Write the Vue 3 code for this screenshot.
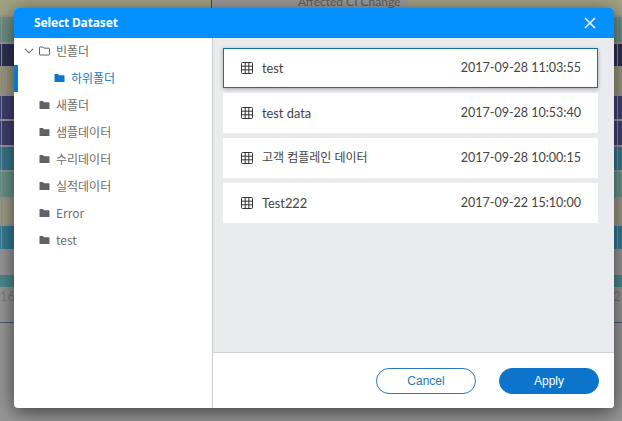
<script setup>
const bands = [
  { h: 25, c: '#6f8f86' },
  { h: 22, c: '#2e3152' },
  { h: 26, c: '#9c9a82' },
  { h: 23, c: '#3f3f70' },
  { h: 24, c: '#3f3f70' },
  { h: 23, c: '#39778a' },
  { h: 25, c: '#6a9288' },
  { h: 25, c: '#9e9c88' },
  { h: 23, c: '#357a92' }
]
const folders = ['새폴더', '샘플데이터', '수리데이터', '실적데이터', 'Error', 'test']
const rows = [
  { name: 'test', date: '2017-09-28 11:03:55', selected: true },
  { name: 'test data', date: '2017-09-28 10:53:40' },
  { name: '고객 컴플레인 데이터', date: '2017-09-28 10:00:15', cjk: true },
  { name: 'Test222', date: '2017-09-22 15:10:00' }
]
const folderPath = 'M0.5 1.5 Q0.5 1 1 1 H4 L5 2.2 H10 Q10.5 2.2 10.5 2.7 V8.5 Q10.5 9 10 9 H1 Q0.5 9 0.5 8.5 Z'
</script>

<template>
  <div class="page">
    <div class="backdrop">
      <div class="strip">
        <div class="strip-cell khaki"></div>
        <div class="strip-cell title-cell">Affected CI Change</div>
        <div class="strip-cell khaki grow"></div>
      </div>
      <div v-for="(b, i) in bands" :key="i" class="band" :style="{ height: b.h + 'px', backgroundColor: b.c }"></div>
      <div class="spacer"></div>
      <div class="teal-band"></div>
      <div class="axis"><span>16</span><span>2</span></div>
      <div class="axis-line"></div>
    </div>

    <div class="dialog">
      <header class="head">
        <span class="title">Select Dataset</span>
        <svg class="close" width="12" height="12" viewBox="0 0 12 12">
          <path d="M1 1 L11 11 M11 1 L1 11" stroke="#fff" stroke-width="1.5" fill="none" />
        </svg>
      </header>
      <div class="body">
        <aside class="tree">
          <div class="node">
            <svg class="chev" width="10" height="6" viewBox="0 0 10 6">
              <path d="M1 0.8 L5 4.8 L9 0.8" stroke="#666" stroke-width="1.1" fill="none" />
            </svg>
            <svg class="fold" width="11" height="10" viewBox="0 0 11 10">
              <path :d="folderPath" fill="none" stroke="#5f6368" stroke-width="1" />
            </svg>
            <span>빈폴더</span>
          </div>
          <div class="node child">
            <svg class="fold" width="11" height="10" viewBox="0 0 11 10">
              <path :d="folderPath" fill="#0d77cc" />
            </svg>
            <span>하위폴더</span>
          </div>
          <div v-for="f in folders" :key="f" class="node plain">
            <svg class="fold" width="11" height="10" viewBox="0 0 11 10">
              <path :d="folderPath" fill="#5f6368" />
            </svg>
            <span>{{ f }}</span>
          </div>
        </aside>
        <section class="main">
          <div class="list">
            <div v-for="r in rows" :key="r.date" class="card" :class="{ selected: r.selected }">
              <svg class="grid-icon" width="12" height="12" viewBox="0 0 12 12">
                <path d="M0.5 1.5 Q0.5 0.5 1.5 0.5 H10.5 Q11.5 0.5 11.5 1.5 V10.5 Q11.5 11.5 10.5 11.5 H1.5 Q0.5 11.5 0.5 10.5 Z M4.2 0.5 V11.5 M7.8 0.5 V11.5 M0.5 4.2 H11.5 M0.5 7.8 H11.5" fill="none" stroke="#333" stroke-width="1" />
              </svg>
              <span class="name" :class="{ cjk: r.cjk }">{{ r.name }}</span>
              <span class="date">{{ r.date }}</span>
            </div>
          </div>
          <footer class="foot">
            <button class="btn ghost">Cancel</button>
            <button class="btn solid">Apply</button>
          </footer>
        </section>
      </div>
    </div>
  </div>
</template>

<style scoped>
.page {
  position: relative;
  width: 622px;
  height: 421px;
  overflow: hidden;
  background: #979797;
}
.backdrop {
  height: 100%;
  display: flex;
  flex-direction: column;
  gap: 2px;
  background-color: #979797;
}
.strip {
  display: flex;
  height: 15px;
  flex: none;
}
.strip-cell.khaki {
  width: 211px;
  background: #a3a283;
}
.strip-cell.grow {
  width: auto;
  flex: 1;
}
.title-cell {
  width: 197px;
  box-sizing: border-box;
  border-left: 1px solid #3f4a60;
  background: #9c9c9c;
  color: #5e5e5e;
  font: 12px/1 Lato, sans-serif;
  padding: 0 0 0 86px;
  margin-top: -4px;
  height: 19px;
  white-space: nowrap;
}
.band {
  flex: none;
  background-image: repeating-linear-gradient(90deg, #8f8f8f 0 1px, transparent 1px 16.2px);
  background-position: 1px 0;
}
.spacer {
  height: 22px;
  flex: none;
}
.teal-band {
  height: 12px;
  flex: none;
  background: #4a8a8e;
}
.axis {
  display: flex;
  justify-content: space-between;
  padding: 0 1px 0 0;
  height: 31px;
  flex: none;
  color: #7c7c7c;
  font: 13px/15px Lato, sans-serif;
}
.axis-line {
  height: 1px;
  flex: none;
  background: #4b5a78;
}
.dialog {
  position: absolute;
  left: 14px;
  top: 8px;
  width: 600px;
  height: 400px;
  display: flex;
  flex-direction: column;
  background: #fff;
  border-radius: 4px;
  box-shadow: 0 4px 20px rgba(0, 0, 0, 0.6);
  overflow: hidden;
}
.head {
  height: 30px;
  flex: none;
  display: flex;
  align-items: center;
  justify-content: space-between;
  padding: 0 18px 0 20px;
  background: #0490ff;
}
.title {
  color: #fff;
  font: 700 12px/1 "Noto Sans", "Noto Sans CJK KR", sans-serif;
  letter-spacing: -0.15px;
}
.body {
  flex: 1;
  display: flex;
  min-height: 0;
}
.tree {
  width: 199px;
  flex: none;
  box-sizing: border-box;
  border-right: 1px solid #c9ccd1;
  font: 12px/1 "Noto Sans CJK KR", "Noto Sans", sans-serif;
  color: #6e6e6e;
}
.node {
  height: 27px;
  box-sizing: border-box;
  display: flex;
  align-items: center;
  padding-left: 10px;
  padding-bottom: 2px;
}
.chev {
  margin-right: 5px;
}
.fold {
  flex: none;
  margin-right: 6px;
}
.plain {
  padding-left: 25px;
}
.child {
  padding-left: 36px;
  border-left: 4px solid #0d77cc;
  color: #1a78c8;
}
.main {
  flex: 1;
  display: flex;
  flex-direction: column;
  min-width: 0;
}
.list {
  flex: 1;
  background: #e9ebef;
  padding: 10px 16px 0 10px;
  display: flex;
  flex-direction: column;
  gap: 5px;
}
.card {
  height: 40px;
  box-sizing: border-box;
  display: flex;
  align-items: center;
  padding: 0 17px 0 18px;
  background: #fff;
  color: #444;
  font: 12.8px/1 Lato, "Noto Sans CJK KR", sans-serif;
}
.card.selected {
  border: 1px solid #1a6fa8;
  padding: 0 16px 0 17px;
  box-shadow: 0 1px 4px rgba(0, 0, 0, 0.3);
}
.grid-icon {
  flex: none;
  margin-right: 9px;
}
.name {
  flex: 1;
}
.name.cjk {
  font-size: 12px;
}
.date {
  font-size: 12.5px;
}
.foot {
  height: 56px;
  flex: none;
  box-sizing: border-box;
  border-top: 1px solid #cfd2d6;
  display: flex;
  align-items: center;
  justify-content: flex-end;
  gap: 23px;
  padding-right: 15px;
  background: #fff;
}
.btn {
  width: 100px;
  height: 26px;
  border-radius: 13px;
  box-sizing: border-box;
  font: 12px/1 "Liberation Sans", sans-serif;
  padding: 0;
}
.ghost {
  background: #fff;
  border: 1px solid #2a78bd;
  color: #2a78bd;
}
.solid {
  background: #0d74cc;
  border: 1px solid #0d74cc;
  color: #fff;
}
</style>
